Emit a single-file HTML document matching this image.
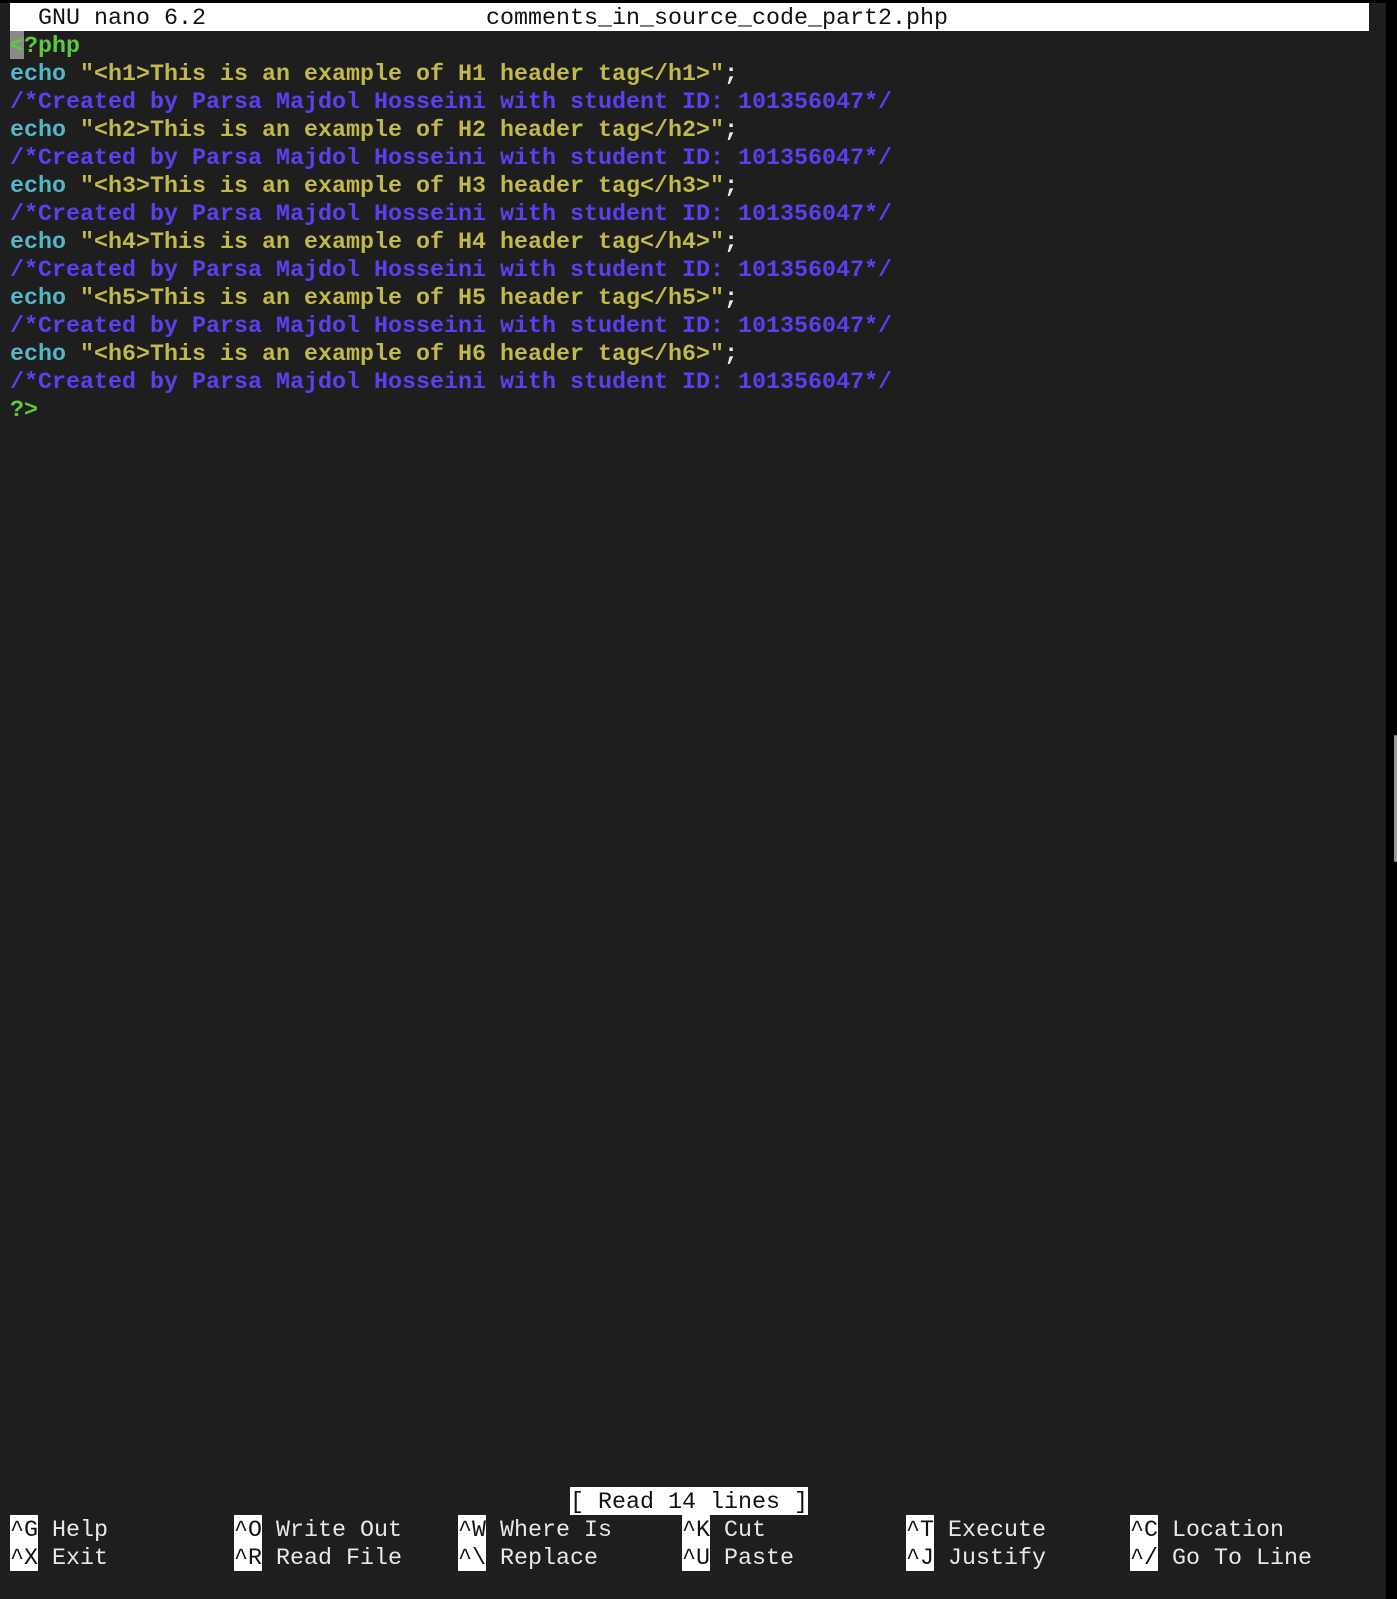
<!DOCTYPE html>
<html><head><meta charset="utf-8"><style>
html,body{margin:0;padding:0;background:#1e1e1e;width:1397px;height:1599px;overflow:hidden}
#t{position:absolute;left:0;top:0;width:1386px;height:3px;background:#000}
#rs{position:absolute;left:1386px;top:0;width:11px;height:1599px;background:#000}
#sb{position:absolute;left:1394px;top:735px;width:3px;height:127px;background:#999;border-radius:2px}
.r{position:absolute;left:10px;height:28px;line-height:32px;font-family:"Liberation Mono",monospace;font-size:23.33px;white-space:pre;color:#e8e8e8}
.b{font-weight:bold}
.k{color:#52b7c7}.s{color:#c2b94c}.c{color:#5c40f0}.p{color:#5ec93c}
.inv{background:#fff;color:#111;display:inline-block;height:28px;line-height:32px;vertical-align:top}
.cur{background:#8a8a8a;color:#5ec93c;display:inline-block;height:28px;vertical-align:top}
#hdr{position:absolute;left:10px;top:3px;width:1359px;height:28px;background:#fff}
</style></head><body>
<div id="t"></div><div id="rs"></div><div id="sb"></div>
<div id="hdr"></div>
<div class="r" style="top:3px;color:#111">  GNU nano 6.2                    comments_in_source_code_part2.php</div>
<div class="r b" style="top:31px"><span class="cur">&lt;</span><span class="p">?php</span></div>
<div class="r b" style="top:59px"><span class="k">echo</span> <span class="s">"&lt;h1&gt;This is an example of H1 header tag&lt;/h1&gt;"</span>;</div>
<div class="r b c" style="top:87px">/*Created by Parsa Majdol Hosseini with student ID: 101356047*/</div>
<div class="r b" style="top:115px"><span class="k">echo</span> <span class="s">"&lt;h2&gt;This is an example of H2 header tag&lt;/h2&gt;"</span>;</div>
<div class="r b c" style="top:143px">/*Created by Parsa Majdol Hosseini with student ID: 101356047*/</div>
<div class="r b" style="top:171px"><span class="k">echo</span> <span class="s">"&lt;h3&gt;This is an example of H3 header tag&lt;/h3&gt;"</span>;</div>
<div class="r b c" style="top:199px">/*Created by Parsa Majdol Hosseini with student ID: 101356047*/</div>
<div class="r b" style="top:227px"><span class="k">echo</span> <span class="s">"&lt;h4&gt;This is an example of H4 header tag&lt;/h4&gt;"</span>;</div>
<div class="r b c" style="top:255px">/*Created by Parsa Majdol Hosseini with student ID: 101356047*/</div>
<div class="r b" style="top:283px"><span class="k">echo</span> <span class="s">"&lt;h5&gt;This is an example of H5 header tag&lt;/h5&gt;"</span>;</div>
<div class="r b c" style="top:311px">/*Created by Parsa Majdol Hosseini with student ID: 101356047*/</div>
<div class="r b" style="top:339px"><span class="k">echo</span> <span class="s">"&lt;h6&gt;This is an example of H6 header tag&lt;/h6&gt;"</span>;</div>
<div class="r b c" style="top:367px">/*Created by Parsa Majdol Hosseini with student ID: 101356047*/</div>
<div class="r b p" style="top:395px">?&gt;</div>
<div class="r" style="top:1487px">                                        <span class="inv">[ Read 14 lines ]</span></div>
<div class="r" style="top:1515px"><span class="inv">^G</span> Help         <span class="inv">^O</span> Write Out    <span class="inv">^W</span> Where Is     <span class="inv">^K</span> Cut          <span class="inv">^T</span> Execute      <span class="inv">^C</span> Location</div>
<div class="r" style="top:1543px"><span class="inv">^X</span> Exit         <span class="inv">^R</span> Read File    <span class="inv">^\</span> Replace      <span class="inv">^U</span> Paste        <span class="inv">^J</span> Justify      <span class="inv">^/</span> Go To Line</div>
</body></html>
